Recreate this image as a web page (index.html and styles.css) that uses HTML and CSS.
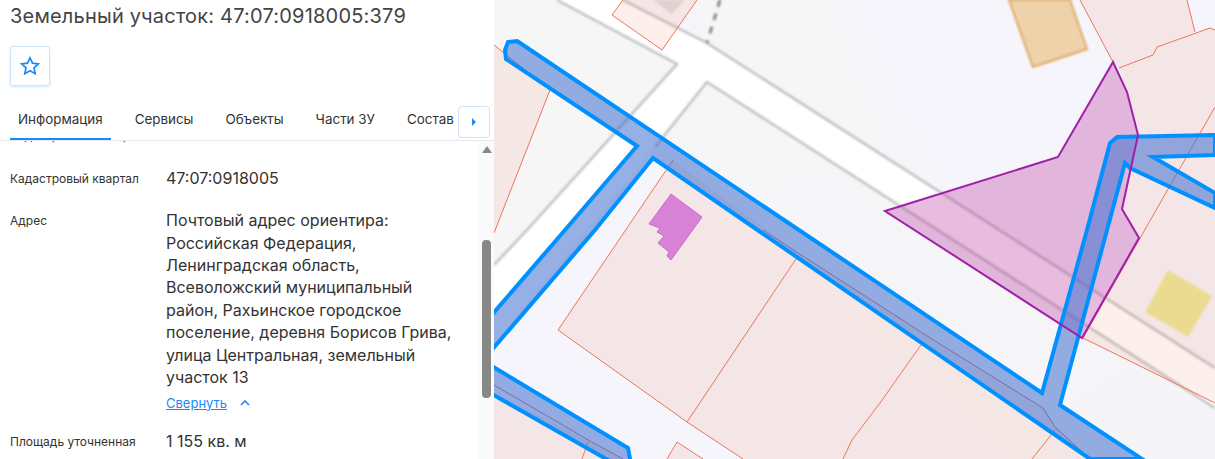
FILE: index.html
```html
<!DOCTYPE html>
<html lang="ru">
<head>
    <meta charset="UTF-8">
    <title>Земельный участок: 47:07:0918005:379</title>
    <link rel="stylesheet" href="styles.css">
</head>
<body>
    <aside class="panel">
        <h1 class="panel-title">Земельный участок: 47:07:0918005:379</h1>
        <button class="star-btn" aria-label="В избранное">
            <svg width="20" height="20" viewBox="0 0 20 20"><path d="M10 1.800l2.500 5.400 5.800.7-4.300 4 1.200 5.800L10 14.800l-5.200 2.900L6 11.900l-4.300-4 5.800-.7z" fill="none" stroke="#1a88ff" stroke-width="1.700"/></svg>
        </button>
        <nav class="tabs">
            <div class="tab-list">
                <a class="tab active">Информация</a>
                <a class="tab">Сервисы</a>
                <a class="tab">Объекты</a>
                <a class="tab">Части ЗУ</a>
                <a class="tab">Состав</a>
            </div>
            <button class="tab-next" aria-label="Дальше">
                <svg width="6" height="10" viewBox="0 0 6 10"><path d="M1 1l4 4-4 4z" fill="#1a88ff"/></svg>
            </button>
        </nav>
        <div class="info">
            <div class="info-list">
                <div class="row">
                    <div class="row-label">Кадастровый номер</div>
                    <div class="row-value">47:07:0918005:379</div>
                </div>
                <div class="row">
                    <div class="row-label">Кадастровый квартал</div>
                    <div class="row-value">47:07:0918005</div>
                </div>
                <div class="row">
                    <div class="row-label">Адрес</div>
                    <div class="row-value">
                        Почтовый адрес ориентира: Российская Федерация, Ленинградская область, Всеволожский муниципальный район, Рахьинское городское поселение, деревня Борисов Грива, улица Центральная, земельный участок 13
                        <div class="collapse">
                            <a class="collapse-link">Свернуть</a>
                            <svg width="10" height="6" viewBox="0 0 10 6"><path d="M1 5l4-4 4 4" fill="none" stroke="#1a88ff" stroke-width="1.600"/></svg>
                        </div>
                    </div>
                </div>
                <div class="row">
                    <div class="row-label">Площадь уточненная</div>
                    <div class="row-value">1 155 кв. м</div>
                </div>
            </div>
            <div class="scrollbar">
                <span class="scroll-up"></span>
                <span class="scroll-thumb"></span>
            </div>
        </div>
    </aside>

    <main class="map">
        <svg class="map-canvas" viewBox="494 0 721 459" width="721" height="459">
            <defs>
                <filter id="soft" x="-5%" y="-5%" width="110%" height="110%"><feGaussianBlur stdDeviation="0.8"/></filter>
                <filter id="wide" x="-20%" y="-20%" width="140%" height="140%"><feGaussianBlur stdDeviation="12"/></filter>
                <linearGradient id="block" x1="0" y1="0" x2="1" y2="1">
                    <stop offset="0" stop-color="#f6f6f7"/>
                    <stop offset="1" stop-color="#f5f5f9"/>
                </linearGradient>
            </defs>

            <!-- кварталы и дорога -->
            <rect x="494" y="0" width="721" height="459" fill="#f5f5fb"/>
            <polygon points="660,-30 823,-30 880,120 930,185 707,43" fill="#f6f6f7" filter="url(#wide)"/>
            <polygon points="494,0 557,0 677,64 527,230 494,265" fill="#f6f6f7"/>
            <polygon points="707,82 1215,408 1215,459 1000,459 650,150" fill="url(#block)"/>
            <polygon points="557,0 623,0 707,43 1215,368 1215,408 707,82 494,345 494,265 527,230 677,64" fill="#fff"/>
            <g fill="none" stroke="#bfbfbf" stroke-width="2.400" filter="url(#soft)">
                <polyline points="557,0 677,64 527,230 494,265"/>
                <polyline points="655,147 707,82 1215,408"/>
                <polyline points="623,0 707,43 1215,368"/>
                <polyline points="720,0 707,43" stroke="#8a8a8a" stroke-width="3" stroke-dasharray="7 7"/>
            </g>

            <!-- участки -->
            <g fill="#f07050" fill-opacity="0.115" stroke="none">
                <polygon points="494,45 550,90 494,233"/>
                <polygon points="623,0 612,15 662,50 697,0"/>
                <polygon points="558,330 673,160 798,253 927,336 1043,408 1055,427 1090,459 743,459 687,422"/>
                <polygon points="494,393 590,441 623,459 494,459"/>
                <polygon points="677,442 703,459 667,459"/>
                <polygon points="1080,0 1113,62 1119,68 1153,55 1157,47 1195,32 1192,20 1187,0"/>
                <polygon points="1119,68 1153,55 1157,47 1210,28 1215,30 1215,403 1083,338 1139,238 1122,209 1138,135 1127,92"/>
            </g>
            <g fill="none" stroke="#ee7558" stroke-width="1">
                <polyline points="494,45 550,90 494,233"/>
                <polyline points="623,0 612,15 662,50 697,0"/>
                <polyline points="673,160 558,330 687,422 743,459"/>
                <polyline points="798,256 687,422"/>
                <polyline points="763,230 798,253 890,312 927,336 1043,408 1055,427 1090,459" stroke="#c66a60"/>
                <polyline points="923,342 880,403 852,440 843,459"/>
                <polyline points="1055,430 1032,459"/>
                <polyline points="494,385 590,441 623,459" stroke="#c66a60"/>
                <polyline points="588,442 582,459"/>
                <polyline points="667,459 677,442 703,459"/>
                <polyline points="1080,0 1113,62"/>
                <polyline points="1119,68 1153,55 1157,47 1210,28 1215,30"/>
                <polyline points="1187,0 1192,20 1195,32"/>
                <polyline points="1215,107 1083,338 1215,403"/>
            </g>

            <!-- строения -->
            <polygon points="653,0 672,14 685,0" fill="#d8c8c4" fill-opacity="0.7" filter="url(#soft)"/>
            <polygon points="1009,0 1033,67 1087,49 1070,0" fill="#edd2aa" stroke="#e0a860" stroke-width="2" filter="url(#soft)"/>
            <polygon points="1168,270 1212,296 1188,337 1145,312" fill="#ebdb90" filter="url(#soft)"/>
            <polygon points="671,194 702,217 671,260 667,256 669,252 658,243 664,236 657,232 660,228 649,224" fill="#d782d5" stroke="#c86cd0"/>

            <!-- зоны -->
            <polygon points="885,211 1058,157 1113,62 1127,92 1138,135 1122,209 1139,238 1082,338" fill="#b8309a" fill-opacity="0.32"/>
            <polygon points="517,41 1042,393 1087,230 1110,143 1117,137 1215,135 1215,155 1153,157 1215,193 1215,208 1130,168 1125,163 1107,230 1060,405 1142,459 1090,459 653,158 595,230 490,352 490,317 565,230 637,146 506,59 505,50 508,42" fill="#3f6fd0" fill-opacity="0.55" stroke="#0091ff" stroke-width="4"/>
            <polygon points="490,365 628,448 631,464 615,464 490,393" fill="#3f6fd0" fill-opacity="0.55" stroke="#0091ff" stroke-width="4"/>
            <polygon points="885,211 1058,157 1113,62 1127,92 1138,135 1122,209 1139,238 1082,338" fill="none" stroke="#a020a8" stroke-width="2"/>
        </svg>
    </main>
</body>
</html>
```

FILE: styles.css
```css
* {
    box-sizing: border-box;
}

body {
    margin: 0;
    height: 459px;
    display: flex;
    overflow: hidden;
    font-family: 'Inter', 'Liberation Sans', sans-serif;
    color: #333;
    background: #fff;
}

.panel {
    width: 494px;
    flex-shrink: 0;
    display: flex;
    flex-direction: column;
    background: #fff;
    overflow: hidden;
}

.panel-title {
    margin: 3px 0 0 10px;
    font-size: 20px;
    line-height: 26px;
    font-weight: 400;
    letter-spacing: 0.2px;
    color: #444;
    white-space: nowrap;
}

.star-btn {
    width: 40px;
    height: 40px;
    margin: 17px 0 0 10px;
    padding: 0;
    display: flex;
    align-items: center;
    justify-content: center;
    background: #fff;
    border: 1px solid #d3e5fb;
    border-radius: 3px;
    box-shadow: 0 1px 3px rgba(26, 136, 255, 0.2);
}

.tabs {
    position: relative;
    height: 55px;
    padding: 20px 37px 0 10px;
    border-bottom: 1px solid #e8e8e8;
}

.tab-list {
    display: flex;
    gap: 16px;
    height: 34px;
    overflow: hidden;
}

.tab {
    flex-shrink: 0;
    height: 34px;
    padding: 0 8px;
    font-size: 13.4px;
    line-height: 27px;
    color: #333;
    white-space: nowrap;
}

.tab.active {
    border-bottom: 2px solid #1a88ff;
}

.tab-next {
    position: absolute;
    top: 20px;
    left: 458px;
    width: 32px;
    height: 32px;
    padding: 0;
    display: flex;
    align-items: center;
    justify-content: center;
    background: #fff;
    border: 1px solid #cfe3fa;
    border-radius: 4px;
}

.info {
    position: relative;
    flex: 1;
    overflow: hidden;
}

.info-list {
    margin-top: -16.6px;
    padding-left: 10px;
}

.row {
    display: flex;
    margin-bottom: 20px;
}

.row-label {
    width: 156px;
    flex-shrink: 0;
    padding-top: 4px;
    font-size: 12px;
    line-height: 16px;
    color: #333;
}

.row-value {
    width: 290px;
    font-size: 16px;
    line-height: 22.4px;
    color: #333;
}

.collapse {
    display: flex;
    align-items: center;
    gap: 13px;
    margin-top: 7px;
    height: 15px;
}

.collapse-link {
    font-size: 13px;
    color: #1a88ff;
    text-decoration: underline;
}

.scrollbar {
    position: absolute;
    top: 0;
    right: 0;
    bottom: 0;
    width: 15px;
    background: #fafafa;
}

.scroll-up {
    position: absolute;
    top: 5px;
    left: 3px;
    border-left: 5px solid transparent;
    border-right: 5px solid transparent;
    border-bottom: 7px solid #888;
}

.scroll-thumb {
    position: absolute;
    top: 99px;
    left: 3px;
    width: 9px;
    height: 158px;
    border-radius: 4px;
    background: #888;
}

.map {
    flex: 1;
    overflow: hidden;
}

.map-canvas {
    display: block;
}
```
